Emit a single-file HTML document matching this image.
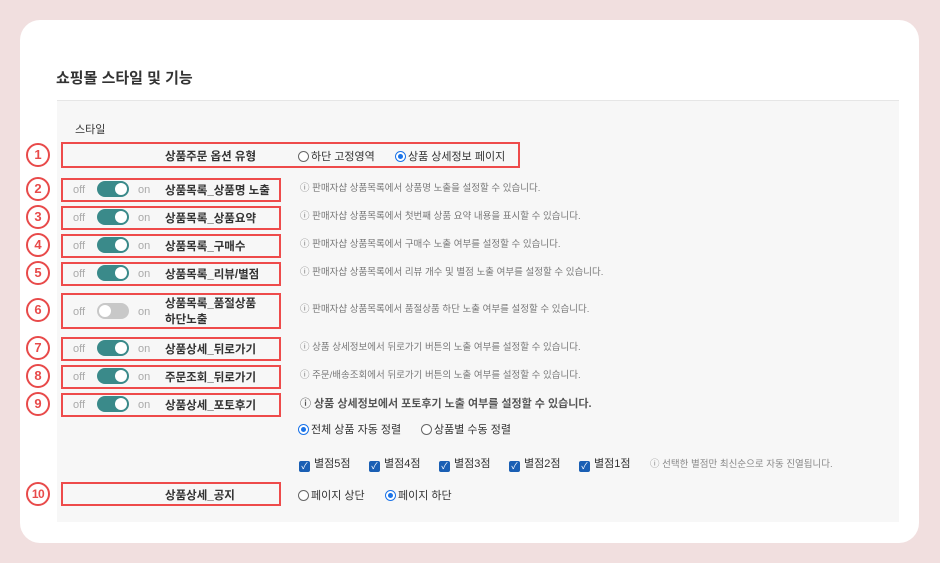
<!DOCTYPE html>
<html><head><meta charset="utf-8"><style>
*{margin:0;padding:0;box-sizing:border-box}
body{width:940px;height:563px;background:#f1dfdf;font-family:"Liberation Sans","Noto Sans CJK KR",sans-serif;position:relative;overflow:hidden;color:#333}
.card{position:absolute;left:20px;top:20px;width:899px;height:523px;background:#fff;border-radius:20px}
.title{position:absolute;left:56px;top:67px;font-size:15px;font-weight:bold;color:#333}
.panel{position:absolute;left:57px;top:100px;width:842px;height:422px;background:#f7f7f7;border-top:1px solid #e6e6e6}
.a{position:absolute;white-space:nowrap}
.num{position:absolute;left:26px;width:24px;height:24px;border:2px solid #e84a4a;border-radius:50%;color:#e84a4a;font-weight:bold;font-size:13px;text-align:center;line-height:20px}
.box{position:absolute;left:61px;width:220px;border:2px solid #ee4b4b}
.off{position:absolute;left:73px;font-size:11px;color:#aaa}
.on{position:absolute;left:138px;font-size:11px;color:#aaa}
.tg{position:absolute;left:97px;width:32px;height:16px;border-radius:8px;background:#3a8a8a}
.tg::after{content:"";position:absolute;right:2px;top:2px;width:12px;height:12px;border-radius:50%;background:#fff}
.tg.x{background:#c8c8c8}.tg.x::after{left:2px;right:auto}
.lb{position:absolute;left:165px;font-size:11.5px;font-weight:bold;color:#333}
.d{position:absolute;left:300px;font-size:9.5px;color:#777}
.r{display:inline-block;width:11px;height:11px;border:1px solid #666;border-radius:50%;vertical-align:-2px;margin-right:2px;background:#fff;position:relative}
.r.s{border-color:#1a73e8}.r.s::after{content:"";position:absolute;left:2px;top:2px;width:5px;height:5px;border-radius:50%;background:#1a73e8}
.o{font-size:11px;color:#333}
.cb{display:inline-block;width:11px;height:11px;background:#1a5fb4;border-radius:2px;vertical-align:-2px;margin-right:4px;color:#fff;font-size:9px;line-height:11px;text-align:center}
.ci{position:absolute;top:455px;font-size:11px;color:#333}
</style></head><body>
<div class="card"></div>
<div class="title">쇼핑몰 스타일 및 기능</div>
<div class="panel"></div>
<div class="a" style="left:75px;top:121px;font-size:11px;color:#333">스타일</div>

<div class="num" style="top:143px">1</div>
<div class="box" style="top:142px;width:459px;height:26px"></div>
<div class="lb" style="top:148px">상품주문 옵션 유형</div>
<div class="a o" style="left:298px;top:148px"><span class="r"></span>하단 고정영역</div>
<div class="a o" style="left:395px;top:148px"><span class="r s"></span>상품 상세정보 페이지</div>

<div class="num" style="top:177px">2</div>
<div class="box" style="top:178px;height:24px"></div>
<span class="off" style="top:184px">off</span><span class="tg" style="top:181px"></span><span class="on" style="top:184px">on</span>
<div class="lb" style="top:182px">상품목록_상품명 노출</div>
<div class="d" style="top:180px">ⓘ 판매자샵 상품목록에서 상품명 노출을 설정할 수 있습니다.</div>

<div class="num" style="top:205px">3</div>
<div class="box" style="top:206px;height:24px"></div>
<span class="off" style="top:212px">off</span><span class="tg" style="top:209px"></span><span class="on" style="top:212px">on</span>
<div class="lb" style="top:210px">상품목록_상품요약</div>
<div class="d" style="top:208px">ⓘ 판매자샵 상품목록에서 첫번째 상품 요약 내용을 표시할 수 있습니다.</div>

<div class="num" style="top:233px">4</div>
<div class="box" style="top:234px;height:24px"></div>
<span class="off" style="top:240px">off</span><span class="tg" style="top:237px"></span><span class="on" style="top:240px">on</span>
<div class="lb" style="top:238px">상품목록_구매수</div>
<div class="d" style="top:236px">ⓘ 판매자샵 상품목록에서 구매수 노출 여부를 설정할 수 있습니다.</div>

<div class="num" style="top:261px">5</div>
<div class="box" style="top:262px;height:24px"></div>
<span class="off" style="top:268px">off</span><span class="tg" style="top:265px"></span><span class="on" style="top:268px">on</span>
<div class="lb" style="top:266px">상품목록_리뷰/별점</div>
<div class="d" style="top:264px">ⓘ 판매자샵 상품목록에서 리뷰 개수 및 별점 노출 여부를 설정할 수 있습니다.</div>

<div class="num" style="top:298px">6</div>
<div class="box" style="top:293px;height:36px"></div>
<span class="off" style="top:306px">off</span><span class="tg x" style="top:303px"></span><span class="on" style="top:306px">on</span>
<div class="lb" style="top:296px;line-height:16px">상품목록_품절상품<br>하단노출</div>
<div class="d" style="top:301px">ⓘ 판매자샵 상품목록에서 품절상품 하단 노출 여부를 설정할 수 있습니다.</div>

<div class="num" style="top:336px">7</div>
<div class="box" style="top:337px;height:24px"></div>
<span class="off" style="top:343px">off</span><span class="tg" style="top:340px"></span><span class="on" style="top:343px">on</span>
<div class="lb" style="top:341px">상품상세_뒤로가기</div>
<div class="d" style="top:339px">ⓘ 상품 상세정보에서 뒤로가기 버튼의 노출 여부를 설정할 수 있습니다.</div>

<div class="num" style="top:364px">8</div>
<div class="box" style="top:365px;height:24px"></div>
<span class="off" style="top:371px">off</span><span class="tg" style="top:368px"></span><span class="on" style="top:371px">on</span>
<div class="lb" style="top:369px">주문조회_뒤로가기</div>
<div class="d" style="top:367px">ⓘ 주문/배송조회에서 뒤로가기 버튼의 노출 여부를 설정할 수 있습니다.</div>

<div class="num" style="top:392px">9</div>
<div class="box" style="top:393px;height:24px"></div>
<span class="off" style="top:399px">off</span><span class="tg" style="top:396px"></span><span class="on" style="top:399px">on</span>
<div class="lb" style="top:397px">상품상세_포토후기</div>
<div class="a" style="left:300px;top:395px;font-size:11px;color:#555;font-weight:bold">ⓘ 상품 상세정보에서 포토후기 노출 여부를 설정할 수 있습니다.</div>

<div class="a o" style="left:298px;top:421px"><span class="r s"></span>전체 상품 자동 정렬</div>
<div class="a o" style="left:421px;top:421px"><span class="r"></span>상품별 수동 정렬</div>
<span class="ci" style="left:299px"><span class="cb">✓</span>별점5점</span>
<span class="ci" style="left:369px"><span class="cb">✓</span>별점4점</span>
<span class="ci" style="left:439px"><span class="cb">✓</span>별점3점</span>
<span class="ci" style="left:509px"><span class="cb">✓</span>별점2점</span>
<span class="ci" style="left:579px"><span class="cb">✓</span>별점1점</span>
<span class="a" style="left:650px;top:456px;font-size:9.5px;color:#888">ⓘ 선택한 별점만 최신순으로 자동 진열됩니다.</span>

<div class="num" style="top:482px;font-size:12px;letter-spacing:-0.5px">10</div>
<div class="box" style="top:482px;height:24px"></div>
<div class="lb" style="top:487px">상품상세_공지</div>
<div class="a o" style="left:298px;top:487px"><span class="r"></span>페이지 상단</div>
<div class="a o" style="left:385px;top:487px"><span class="r s"></span>페이지 하단</div>
</body></html>
